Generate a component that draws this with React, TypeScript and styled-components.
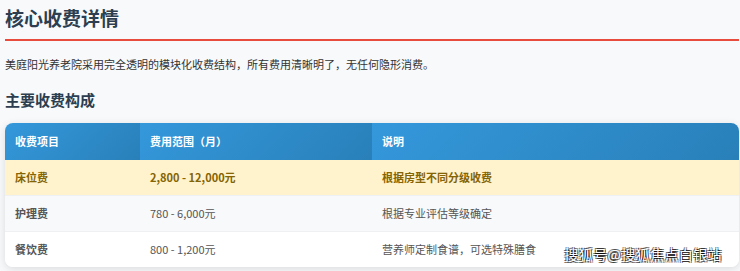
import styled, { createGlobalStyle } from 'styled-components';

const GlobalStyle = createGlobalStyle`
  html, body {
    margin: 0;
    padding: 0;
    background: #f7f9fb;
    font-family: "Noto Sans CJK SC", "Noto Sans", sans-serif;
  }
`;

type Fee = {
  name: string
  range: string
  note: string
  highlight?: boolean
};

const fees: Fee[] = [
  { name: '床位费', range: '2,800 - 12,000元', note: '根据房型不同分级收费', highlight: true },
  { name: '护理费', range: '780 - 6,000元', note: '根据专业评估等级确定' },
  { name: '餐饮费', range: '800 - 1,200元', note: '营养师定制食谱，可选特殊膳食' },
];

export default function App() {
  return (
    <Page>
      <GlobalStyle />
      <Title>核心收费详情</Title>
      <Intro>美庭阳光养老院采用完全透明的模块化收费结构，所有费用清晰明了，无任何隐形消费。</Intro>
      <SubTitle>主要收费构成</SubTitle>
      <Card>
        <Table>
          <colgroup>
            <col style={{ width: 135 }} />
            <col style={{ width: 232 }} />
            <col />
          </colgroup>
          <thead>
            <tr>
              <Th>收费项目</Th>
              <Th>费用范围（月）</Th>
              <Th>说明</Th>
            </tr>
          </thead>
          <tbody>
            {fees.map((f, i) => (
              <Row key={f.name} $highlight={f.highlight} $alt={i % 2 === 1}>
                <Td $bold>{f.name}</Td>
                <Td $bold={f.highlight}>{f.range}</Td>
                <Td $bold={f.highlight}>{f.note}</Td>
              </Row>
            ))}
          </tbody>
        </Table>
      </Card>
      <Watermark>搜狐号@搜狐焦点白银站</Watermark>
    </Page>
  );
}

const Page = styled.div`
  position: relative;
  padding: 0 1px 9px 5px;
  height: 271px;
  box-sizing: border-box;
`;

const Title = styled.h1`
  margin: 0;
  padding: 4px 0 7px;
  font-size: 19px;
  line-height: 28px;
  font-weight: bold;
  color: #2c3e50;
  border-bottom: 2px solid #e74c3c;
`;

const Intro = styled.p`
  margin: 14px 0 0;
  font-size: 11px;
  line-height: 18px;
  color: #333;
`;

const SubTitle = styled.h2`
  margin: 15px 0 0;
  font-size: 15px;
  line-height: 24px;
  font-weight: bold;
  color: #2c3e50;
`;

const Card = styled.div`
  margin-top: 11px;
  border-radius: 8px;
  overflow: hidden;
  background: #fff;
  box-shadow: 0 2px 8px rgba(0, 0, 0, 0.12);
`;

const Table = styled.table`
  width: 100%;
  border-collapse: collapse;
  table-layout: fixed;
  font-size: 11px;
`;

const Th = styled.th`
  text-align: left;
  padding: 11px 10px;
  line-height: 15px;
  font-weight: bold;
  color: #fff;
  background: linear-gradient(135deg, #3498db, #2980b9);
`;

const Row = styled.tr<{ $highlight?: boolean; $alt?: boolean }>`
  background: ${p => (p.$highlight ? '#fff3cd' : p.$alt ? '#f8f9fa' : '#fff')};
  color: ${p => (p.$highlight ? '#856404' : '#555')};
  border-bottom: 1px solid #eef0f2;

  &:last-child {
    border-bottom: none;
  }
`;

const Td = styled.td<{ $bold?: boolean }>`
  padding: 10px 10px;
  line-height: 15px;
  font-weight: ${p => (p.$bold ? 'bold' : 'normal')};
  color: inherit;

  &:first-child {
    color: ${p => (p.$bold ? 'inherit' : '#333')};
  }
`;

const Watermark = styled.div`
  position: absolute;
  right: 18px;
  bottom: 8px;
  font-size: 14px;
  line-height: 18px;
  color: #fff;
  text-shadow: -1px -1px 0 rgba(0, 0, 0, 0.55), 1px -1px 0 rgba(0, 0, 0, 0.55),
    -1px 1px 0 rgba(0, 0, 0, 0.55), 1px 1px 0 rgba(0, 0, 0, 0.55);
  letter-spacing: 0.4px;
`;
